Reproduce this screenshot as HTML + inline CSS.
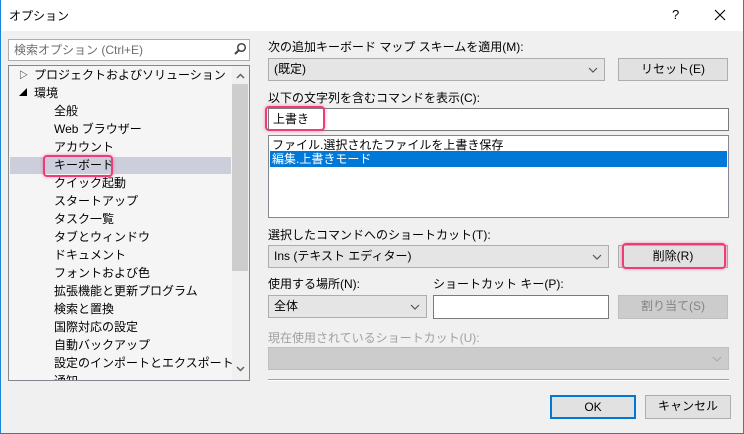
<!DOCTYPE html>
<html><head><meta charset="utf-8"><style>
*{box-sizing:border-box;margin:0;padding:0}
body{width:744px;height:434px;background:#f0f0f0;font-family:"Liberation Sans","Noto Sans CJK JP",sans-serif;font-size:12px;color:#000;position:relative;overflow:hidden}
.a{position:absolute}
.win{position:absolute;left:0;top:0;width:744px;height:434px;border:1px solid #1883d7;border-top:none}
.title{left:0;top:0;width:744px;height:31px;background:#fff}
.lbl{position:absolute;white-space:nowrap;line-height:14px}
.combo{position:absolute;background:#e5e5e5;border:1px solid #adadad;padding-left:5px;line-height:20px}
.combo svg{position:absolute;right:6px;top:8px}
.btn{position:absolute;background:#e1e1e1;border:1px solid #adadad;text-align:center;line-height:20px}
.tb{position:absolute;background:#fff;border:1px solid #7a7a7a}
.hl{position:absolute;border:2.5px solid #ef3b77;border-radius:4px;box-shadow:0 0 3px rgba(239,59,119,.5)}
.tree{position:absolute;left:9px;top:66px;width:223px;height:314px;overflow:hidden}
.tree div{position:absolute;white-space:nowrap;line-height:18px}
</style></head><body>
<div class="a title"></div>
<div class="lbl" style="left:9px;top:9px">オプション</div>
<div class="lbl" style="left:672px;top:8px;font-size:13px">?</div>
<svg class="a" style="left:714px;top:9px" width="12" height="12"><path d="M1 1L11 11M11 1L1 11" stroke="#000" stroke-width="1.1"/></svg>

<div class="tb" style="left:8px;top:39px;width:242px;height:22px;border-color:#adadad"></div>
<div class="lbl" style="left:14px;top:43px;color:#6d6d6d">検索オプション (Ctrl+E)</div>
<svg class="a" style="left:233px;top:42px" width="14" height="14"><circle cx="8.5" cy="5.5" r="3.8" fill="none" stroke="#444" stroke-width="1.5"/><path d="M6 8L2 12" stroke="#444" stroke-width="2"/></svg>

<div class="tb" style="left:8px;top:65px;width:242px;height:316px;background:#f5f5f5;border-color:#828790"></div>
<div class="a" style="left:232px;top:66px;width:17px;height:314px;background:#f0f0f0"></div>
<div class="a" style="left:232px;top:84px;width:16px;height:187px;background:#cdcdcd"></div>
<svg class="a" style="left:236px;top:73px" width="9" height="6"><path d="M1 5L4.5 1.5L8 5" fill="none" stroke="#606060" stroke-width="1.5"/></svg>
<svg class="a" style="left:236px;top:366px" width="9" height="6"><path d="M1 1L4.5 4.5L8 1" fill="none" stroke="#606060" stroke-width="1.5"/></svg>
<div class="a" style="left:10px;top:157px;width:221px;height:17px;background:#cccedb"></div>
<div class="tree">
<div style="left:10px;top:0px;font-size:9px">▷</div>
<div style="left:25px;top:0px">プロジェクトおよびソリューション</div>
<div style="left:10px;top:18px;font-size:8px">◢</div>
<div style="left:25px;top:18px">環境</div>
<div style="left:45px;top:36px">全般</div>
<div style="left:45px;top:54px">Web ブラウザー</div>
<div style="left:45px;top:72px">アカウント</div>
<div style="left:45px;top:90px">キーボード</div>
<div style="left:45px;top:108px">クイック起動</div>
<div style="left:45px;top:126px">スタートアップ</div>
<div style="left:45px;top:144px">タスク一覧</div>
<div style="left:45px;top:162px">タブとウィンドウ</div>
<div style="left:45px;top:180px">ドキュメント</div>
<div style="left:45px;top:198px">フォントおよび色</div>
<div style="left:45px;top:216px">拡張機能と更新プログラム</div>
<div style="left:45px;top:234px">検索と置換</div>
<div style="left:45px;top:252px">国際対応の設定</div>
<div style="left:45px;top:270px">自動バックアップ</div>
<div style="left:45px;top:288px">設定のインポートとエクスポート</div>
<div style="left:45px;top:306px">通知</div>
</div>
<div class="hl" style="left:43px;top:155px;width:70px;height:22px"></div>

<div class="lbl" style="left:268px;top:40px">次の追加キーボード マップ スキームを適用(M):</div>
<div class="combo" style="left:268px;top:58px;width:337px;height:23px">(既定)<svg width="10" height="6"><path d="M1 1L5 5L9 1" fill="none" stroke="#555" stroke-width="1.2"/></svg></div>
<div class="btn" style="left:618px;top:58px;width:110px;height:23px">リセット(E)</div>

<div class="lbl" style="left:268px;top:91px">以下の文字列を含むコマンドを表示(C):</div>
<div class="tb" style="left:268px;top:108px;width:461px;height:23px"></div>
<div class="lbl" style="left:273px;top:112px">上書き</div>
<div class="hl" style="left:265px;top:106px;width:60px;height:25px"></div>

<div class="tb" style="left:268px;top:135px;width:461px;height:83px;border-color:#828790"></div>
<div class="lbl" style="left:272px;top:138px">ファイル.選択されたファイルを上書き保存</div>
<div class="a" style="left:270px;top:151px;width:457px;height:16px;background:#0078d7"></div>
<div class="lbl" style="left:272px;top:152px;color:#fff">編集.上書きモード</div>

<div class="lbl" style="left:268px;top:228px">選択したコマンドへのショートカット(T):</div>
<div class="combo" style="left:268px;top:245px;width:341px;height:23px">Ins (テキスト エディター)<svg width="10" height="6"><path d="M1 1L5 5L9 1" fill="none" stroke="#555" stroke-width="1.2"/></svg></div>
<div class="btn" style="left:618px;top:245px;width:110px;height:23px">削除(R)</div>
<div class="hl" style="left:622px;top:243px;width:104px;height:26px"></div>

<div class="lbl" style="left:268px;top:277px">使用する場所(N):</div>
<div class="combo" style="left:268px;top:295px;width:159px;height:23px">全体<svg width="10" height="6"><path d="M1 1L5 5L9 1" fill="none" stroke="#555" stroke-width="1.2"/></svg></div>
<div class="lbl" style="left:433px;top:277px">ショートカット キー(P):</div>
<div class="tb" style="left:433px;top:295px;width:176px;height:24px"></div>
<div class="btn" style="left:618px;top:295px;width:110px;height:24px;background:#cccccc;border-color:#bfbfbf;color:#838383">割り当て(S)</div>

<div class="lbl" style="left:268px;top:331px;color:#a0a0a0">現在使用されているショートカット(U):</div>
<div class="combo" style="left:268px;top:347px;width:461px;height:23px;background:#cccccc;border-color:#bfbfbf"><svg width="10" height="6"><path d="M1 1L5 5L9 1" fill="none" stroke="#aaa" stroke-width="1.2"/></svg></div>
<div class="a" style="left:268px;top:379px;width:461px;height:1px;background:#a0a0a0"></div>
<div class="a" style="left:268px;top:380px;width:461px;height:1px;background:#fff"></div>

<div class="btn" style="left:550px;top:395px;width:86px;height:24px;border:2px solid #0078d7;line-height:20px">OK</div>
<div class="btn" style="left:645px;top:395px;width:86px;height:24px">キャンセル</div>
<div class="win"></div>
</body></html>
